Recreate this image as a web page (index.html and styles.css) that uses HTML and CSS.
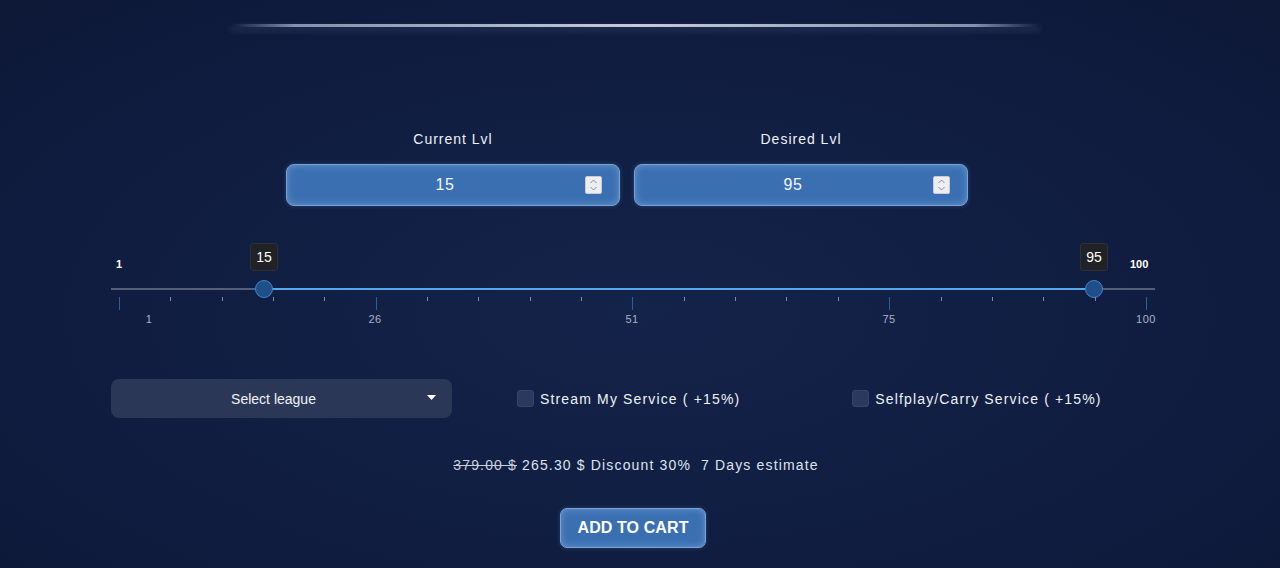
FILE: index.html
```html
<!DOCTYPE html>
<html lang="en">
<head>
<meta charset="utf-8">
<title>Level Boost</title>
<link rel="stylesheet" href="styles.css">
</head>
<body>
<div class="page">
  <div class="glow-line"></div>

  <div class="wrap">
    <div class="levels">
      <div class="level">
        <div class="level-label">Current Lvl</div>
        <div class="num-input">
          <span class="num-value">15</span>
          <span class="spin">
            <svg width="9" height="14" viewBox="0 0 9 14"><path d="M1.5 5 L4.5 2 L7.5 5" fill="none" stroke="#8a8f98" stroke-width="1"/><path d="M1.5 9 L4.5 12 L7.5 9" fill="none" stroke="#8a8f98" stroke-width="1"/></svg>
          </span>
        </div>
      </div>
      <div class="level">
        <div class="level-label">Desired Lvl</div>
        <div class="num-input">
          <span class="num-value">95</span>
          <span class="spin">
            <svg width="9" height="14" viewBox="0 0 9 14"><path d="M1.5 5 L4.5 2 L7.5 5" fill="none" stroke="#8a8f98" stroke-width="1"/><path d="M1.5 9 L4.5 12 L7.5 9" fill="none" stroke="#8a8f98" stroke-width="1"/></svg>
          </span>
        </div>
      </div>
    </div>

    <div class="slider">
      <span class="edge edge-min">1</span>
      <span class="edge edge-max">100</span>
      <div class="track"></div>
      <div class="fill" style="left:153px;width:830px"></div>
      <div class="thumb" style="left:153px"><span class="tip">15</span></div>
      <div class="thumb" style="left:983px"><span class="tip">95</span></div>
      <div class="ticks">
        <i class="major"></i><i></i><i></i><i></i><i></i>
        <i class="major"></i><i></i><i></i><i></i><i></i>
        <i class="major"></i><i></i><i></i><i></i><i></i>
        <i class="major"></i><i></i><i></i><i></i><i></i>
        <i class="major"></i>
      </div>
      <span class="tick-label" style="left:38px">1</span>
      <span class="tick-label" style="left:264px">26</span>
      <span class="tick-label" style="left:521px">51</span>
      <span class="tick-label" style="left:778px">75</span>
      <span class="tick-label" style="left:1035px">100</span>
    </div>

    <div class="options">
      <div class="select">
        <span class="select-text">Select league</span>
        <svg class="caret" width="9" height="5" viewBox="0 0 9 5"><path d="M0 0 H9 L4.5 5 Z" fill="#ffffff"/></svg>
      </div>
      <label class="check check-stream"><span class="box"></span><span>Stream My Service ( +15%)</span></label>
      <label class="check check-self"><span class="box"></span><span>Selfplay/Carry Service ( +15%)</span></label>
    </div>

    <div class="price">
      <s class="old">379.00 $</s> <span>265.30 $</span> <span>Discount 30%</span> <span class="eta">7 Days estimate</span>
    </div>

    <div class="cart-row">
      <button class="cart">ADD TO CART</button>
    </div>
  </div>
</div>
</body>
</html>
```

FILE: styles.css
```css
* { box-sizing: border-box; }

html, body {
  margin: 0;
  padding: 0;
  height: 100%;
}

body {
  font-family: "Liberation Sans", Arial, sans-serif;
  color: #e6eaf2;
  background: radial-gradient(ellipse 75% 80% at 50% 55%, #142349 0%, #101d41 55%, #0d1836 100%);
  overflow: hidden;
}

.page {
  width: 1280px;
  height: 568px;
  padding-top: 24px;
}

.glow-line {
  width: 810px;
  height: 3px;
  margin-left: 230px;
  background: linear-gradient(90deg, rgba(170,185,210,0) 0%, rgba(170,185,210,0.75) 8%, #c3ccdc 50%, rgba(170,185,210,0.75) 92%, rgba(170,185,210,0) 100%);
  box-shadow: 0 3px 6px rgba(150,170,205,0.25);
  border-radius: 2px;
}

.wrap {
  width: 1044px;
  margin-left: 111px;
}

.levels {
  display: flex;
  gap: 14px;
  margin-left: 175px;
  margin-top: 104px;
}

.level {
  width: 334px;
  display: flex;
  flex-direction: column;
  align-items: center;
}

.level-label {
  font-size: 14px;
  line-height: 16px;
  letter-spacing: 1px;
  color: #eef1f6;
  margin-bottom: 17px;
}

.num-input {
  width: 334px;
  height: 42px;
  border-radius: 8px;
  background: #3a70b2;
  border: 1px solid #78a1d4;
  box-shadow: inset 0 0 7px rgba(200,220,255,0.35), 0 0 4px rgba(90,140,210,0.35);
  display: flex;
  align-items: center;
  padding: 0 17px 0 18px;
}

.num-value {
  flex: 1;
  text-align: center;
  font-size: 16px;
  color: #f2f5fa;
  letter-spacing: 0.5px;
}

.spin {
  width: 17px;
  height: 18px;
  background: #eceef1;
  border: 1px solid #c9ccd2;
  border-radius: 2px;
  display: flex;
  align-items: center;
  justify-content: center;
}

.slider {
  position: relative;
  height: 120px;
  margin-top: 36px;
}

.edge {
  position: absolute;
  top: 16px;
  font-size: 11px;
  font-weight: bold;
  color: #ffffff;
  line-height: 13px;
}
.edge-min { left: 5px; }
.edge-max { left: 1019px; }

.track {
  position: absolute;
  left: 0;
  right: 0;
  top: 46px;
  height: 2px;
  background: #545f77;
}

.fill {
  position: absolute;
  top: 46px;
  height: 2px;
  background: #5aa6ec;
}

.thumb {
  position: absolute;
  top: 38px;
  width: 18px;
  height: 18px;
  margin-left: -9px;
  border-radius: 50%;
  background: #1e4f88;
  border: 1px solid #3f85cf;
}

.tip {
  position: absolute;
  left: 50%;
  bottom: 26px;
  transform: translateX(-50%);
  width: 28px;
  height: 28px;
  border-radius: 3px;
  background: #202226;
  border: 1px solid #2e3036;
  color: #ffffff;
  font-size: 14px;
  line-height: 26px;
  text-align: center;
}

.ticks {
  position: absolute;
  left: 8px;
  right: 8px;
  top: 55px;
  display: flex;
  justify-content: space-between;
  align-items: flex-start;
}
.ticks i {
  display: block;
  width: 1px;
  height: 4px;
  background: #7f8aa2;
}
.ticks i.major {
  height: 13px;
  background: #28609f;
}

.tick-label {
  position: absolute;
  top: 71px;
  transform: translateX(-50%);
  font-size: 11px;
  line-height: 13px;
  letter-spacing: 0.5px;
  color: #a8b2c6;
}

.options {
  display: flex;
  align-items: center;
  margin-top: 17px;
  height: 39px;
}

.select {
  width: 341px;
  height: 39px;
  border-radius: 8px;
  background: #2a3757;
  display: flex;
  align-items: center;
  position: relative;
}

.select-text {
  flex: 1;
  text-align: center;
  font-size: 14px;
  color: #f0f2f7;
  padding-right: 16px;
}

.caret {
  position: absolute;
  right: 16px;
  top: 16px;
}

.check {
  display: flex;
  align-items: center;
  gap: 6px;
  font-size: 14px;
  letter-spacing: 1.15px;
  color: #eef1f6;
}
.check-stream { margin-left: 65px; }
.check-self { margin-left: 112px; }

.box {
  width: 17px;
  height: 17px;
  border-radius: 3px;
  background: #2b3a5c;
  border: 1px solid #34456a;
}

.price {
  margin-top: 39px;
  text-align: center;
  padding-left: 6px;
  font-size: 14px;
  line-height: 16px;
  letter-spacing: 1.15px;
  color: #dde3ee;
}
.price .old {
  color: #c8cfdc;
}
.price .eta {
  margin-left: 5px;
}

.cart-row {
  display: flex;
  justify-content: center;
  margin-top: 35px;
}

.cart {
  width: 146px;
  height: 40px;
  border-radius: 7px;
  background: #3a70b2;
  border: 1px solid #7aa3d6;
  box-shadow: inset 0 0 7px rgba(200,220,255,0.35), 0 0 4px rgba(90,140,210,0.35);
  color: #ffffff;
  font-family: "Liberation Sans", Arial, sans-serif;
  font-weight: bold;
  font-size: 16px;
  letter-spacing: 0.1px;
  cursor: pointer;
}
```
